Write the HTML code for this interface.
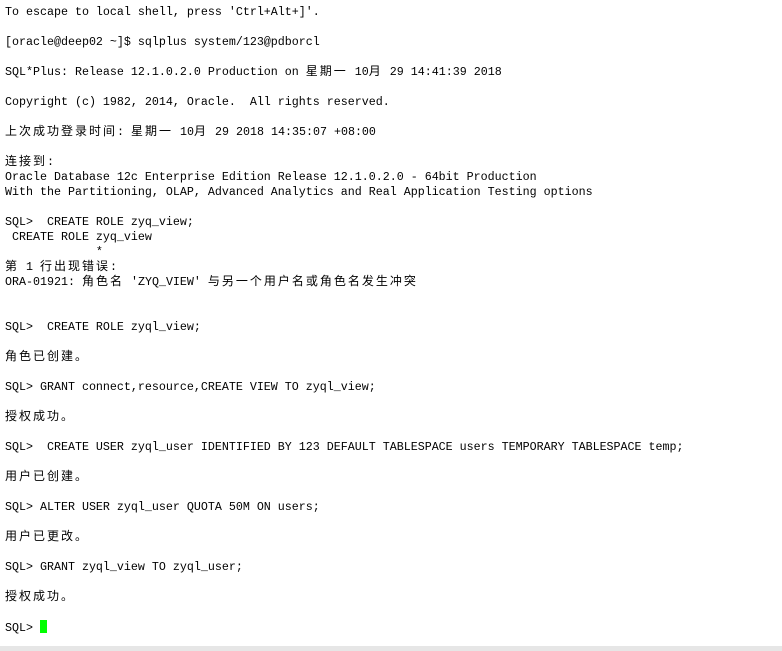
<!DOCTYPE html>
<html><head><meta charset="utf-8"><style>
html,body{margin:0;padding:0;background:#fff;width:782px;height:651px;overflow:hidden;position:relative}
.t{position:absolute;left:5px;top:5px;font-family:"Liberation Mono","Noto Sans CJK SC",monospace;font-size:11.67px;color:#000}
.t div{height:15px;line-height:15px;white-space:pre;overflow:visible}
.c{font-family:"Noto Sans CJK SC","WenQuanYi Zen Hei",sans-serif;font-size:12px;letter-spacing:2px;line-height:12px}
.cur{display:inline-block;width:7px;height:13px;background:#00ff00;vertical-align:-2px}
.bar{position:absolute;left:0;right:0;bottom:0;height:5px;background:#e6e6e6}
</style></head><body>
<div class="t">
<div>To escape to local shell, press 'Ctrl+Alt+]'.</div>
<div></div>
<div>[oracle@deep02 ~]$ sqlplus system/123@pdborcl</div>
<div></div>
<div>SQL*Plus: Release 12.1.0.2.0 Production on <span class="c">星期一</span> 10<span class="c">月</span> 29 14:41:39 2018</div>
<div></div>
<div>Copyright (c) 1982, 2014, Oracle.  All rights reserved.</div>
<div></div>
<div><span class="c">上次成功登录时间</span>: <span class="c">星期一</span> 10<span class="c">月</span> 29 2018 14:35:07 +08:00</div>
<div></div>
<div><span class="c">连接到</span>:</div>
<div>Oracle Database 12c Enterprise Edition Release 12.1.0.2.0 - 64bit Production</div>
<div>With the Partitioning, OLAP, Advanced Analytics and Real Application Testing options</div>
<div></div>
<div>SQL>  CREATE ROLE zyq_view;</div>
<div> CREATE ROLE zyq_view</div>
<div>             *</div>
<div><span class="c">第</span> 1 <span class="c">行出现错误</span>:</div>
<div>ORA-01921: <span class="c">角色名</span> 'ZYQ_VIEW' <span class="c">与另一个用户名或角色名发生冲突</span></div>
<div></div>
<div></div>
<div>SQL>  CREATE ROLE zyql_view;</div>
<div></div>
<div><span class="c">角色已创建。</span></div>
<div></div>
<div>SQL> GRANT connect,resource,CREATE VIEW TO zyql_view;</div>
<div></div>
<div><span class="c">授权成功。</span></div>
<div></div>
<div>SQL>  CREATE USER zyql_user IDENTIFIED BY 123 DEFAULT TABLESPACE users TEMPORARY TABLESPACE temp;</div>
<div></div>
<div><span class="c">用户已创建。</span></div>
<div></div>
<div>SQL> ALTER USER zyql_user QUOTA 50M ON users;</div>
<div></div>
<div><span class="c">用户已更改。</span></div>
<div></div>
<div>SQL> GRANT zyql_view TO zyql_user;</div>
<div></div>
<div><span class="c">授权成功。</span></div>
<div></div>
<div>SQL> <span class="cur"></span></div>
</div>
<div class="bar"></div>
</body></html>
